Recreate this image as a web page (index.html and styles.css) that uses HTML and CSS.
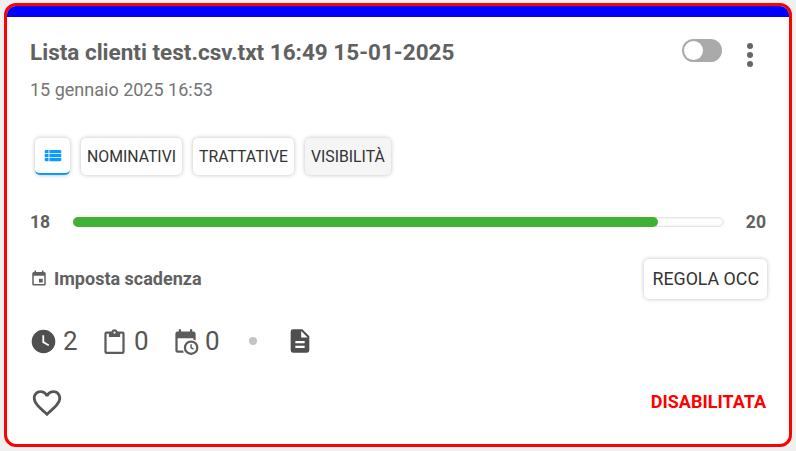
FILE: index.html
```html
<!DOCTYPE html>
<html lang="en">
<head>
  <meta charset="UTF-8" />
  <meta name="viewport" content="width=device-width, initial-scale=1.0" />
  <title>Lista clienti</title>
  <link rel="stylesheet" href="styles.css">
</head>
<body>
  <div class="card">
    <div class="topbar"></div>
    <div class="content">
      <div class="head">
        <div class="titles">
          <h1>Lista clienti test.csv.txt 16:49 15-01-2025</h1>
          <p class="date">15 gennaio 2025 16:53</p>
        </div>
        <div class="toggle"><span class="knob"></span></div>
        <div class="dots"><span></span><span></span><span></span></div>
      </div>

      <div class="tabs">
        <button class="tab tab-icon" aria-label="Lista">
          <svg width="18" height="18" viewBox="0 0 24 24"><path fill="#0a9bff" d="M1 5.500a1.500 1.500 0 0 1 1.500-1.500H6v4.200H1zM7.200 4h14.300A1.500 1.500 0 0 1 23 5.500v2.700H7.200zM1 9.400h5v4.200H1zM7.200 9.400H23v4.200H7.200zM1 14.800h5V19H2.500A1.500 1.500 0 0 1 1 17.500zM7.200 14.800H23v2.700a1.500 1.500 0 0 1-1.500 1.500H7.200z"/></svg>
        </button>
        <button class="tab">NOMINATIVI</button>
        <button class="tab">TRATTATIVE</button>
        <button class="tab tab-grey">VISIBILITÀ</button>
      </div>

      <div class="progress-row">
        <span class="num">18</span>
        <div class="track"><div class="fill" style="width: 90.2%"></div></div>
        <span class="num">20</span>
      </div>

      <div class="deadline-row">
        <div class="deadline">
          <svg width="18" height="18" viewBox="0 0 24 24"><path fill="#616161" d="M19 4h-1V2h-2v2H8V2H6v2H5a2 2 0 0 0-2 2v14a2 2 0 0 0 2 2h14a2 2 0 0 0 2-2V6a2 2 0 0 0-2-2zm0 16H5V9h14zm-7-7h5v5h-5z"/></svg>
          <span>Imposta scadenza</span>
        </div>
        <button class="tab rule">REGOLA OCC</button>
      </div>

      <div class="stats">
        <div class="stat">
          <svg width="27" height="27" viewBox="0 0 24 24"><path fill="#4f4f4f" d="M12 1.500a10.500 10.500 0 1 0 0 21 10.500 10.500 0 0 0 0-21zm4.300 14.600L11 13V6.500h1.600v5.600l4.500 2.700z"/></svg>
          <span>2</span>
        </div>
        <div class="stat">
          <svg width="27" height="27" viewBox="0 0 24 24"><path fill="#5c5c5c" d="M19 3h-4.200a3 3 0 0 0-5.600 0H5a2 2 0 0 0-2 2v16a2 2 0 0 0 2 2h14a2 2 0 0 0 2-2V5a2 2 0 0 0-2-2zm-7 0a1 1 0 1 1 0 2 1 1 0 0 1 0-2zm7 18H5V5h2v3h10V5h2z"/></svg>
          <span>0</span>
        </div>
        <div class="stat">
          <svg width="27" height="27" viewBox="0 0 24 24"><path fill="#5c5c5c" d="M19 3h-1V1h-2v2H8V1H6v2H5a2 2 0 0 0-2 2v15a2 2 0 0 0 2 2h5.500a7 7 0 0 1-.6-2H5V9h14v1.500a7 7 0 0 1 2 .6V5a2 2 0 0 0-2-2z"/><path fill="#5c5c5c" d="M17 11a6.500 6.500 0 1 0 0 13 6.500 6.500 0 0 0 0-13zm0 11a4.500 4.500 0 1 1 0-9 4.500 4.500 0 0 1 0 9zm.6-7.500h-1.300v3.400l2.500 1.500.7-1.100-1.900-1.100z"/></svg>
          <span>0</span>
        </div>
        <span class="sep"></span>
        <svg class="doc" width="28" height="28" viewBox="0 0 24 24"><path fill="#4f4f4f" d="M14 2H6a2 2 0 0 0-2 2v16a2 2 0 0 0 2 2h12a2 2 0 0 0 2-2V8zm2 16H8v-2h8zm0-4H8v-2h8zm-3-5V3.500L18.500 9z"/></svg>
      </div>

      <div class="foot">
        <svg class="heart" width="34" height="34" viewBox="0 0 24 24"><path fill="#555" d="M16.500 3c-1.700 0-3.400.8-4.500 2.100C10.900 3.800 9.200 3 7.500 3 4.400 3 2 5.400 2 8.500c0 3.800 3.400 6.900 8.600 11.500l1.400 1.300 1.400-1.300c5.200-4.600 8.600-7.700 8.600-11.500C22 5.400 19.600 3 16.500 3zm-4.400 15.600l-.1.100-.1-.1C7.100 14.300 4 11.500 4 8.500 4 6.500 5.500 5 7.500 5c1.500 0 3 1 3.600 2.400h1.900C13.500 6 15 5 16.500 5c2 0 3.500 1.500 3.500 3.500 0 3-3.100 5.800-7.900 10.100z"/></svg>
        <span class="status">DISABILITATA</span>
      </div>
    </div>
  </div>
</body>
</html>
```

FILE: styles.css
```css
html, body {
  height: 100%;
}

body {
  font-family: Roboto, Arial, sans-serif;
  background-color: #f0f0f0;
  margin: 0;
  padding: 3px 4px 4px 4px;
  box-sizing: border-box;
  overflow: hidden;
}

.card {
  height: 444px;
  box-sizing: border-box;
  background-color: #fff;
  border: 3px solid #f00;
  border-radius: 12px;
  overflow: hidden;
}

.topbar {
  height: 11px;
  background-color: #00f;
}

.content {
  padding: 0 23px 0 23px;
}

.head {
  display: flex;
  align-items: flex-start;
  height: 99px;
  padding-top: 22px;
  box-sizing: border-box;
}

.titles {
  flex: 1;
}

h1 {
  margin: 0;
  font-size: 22.500px;
  line-height: 26px;
  font-weight: 700;
  color: #616161;
}

.date {
  margin: 14px 0 0 0;
  font-size: 18px;
  line-height: 22px;
  color: #757575;
}

.toggle {
  width: 40px;
  height: 23px;
  background-color: #aaa;
  border-radius: 12px;
  box-sizing: border-box;
  padding: 2px;
}

.knob {
  display: block;
  width: 19px;
  height: 19px;
  background-color: #fff;
  border-radius: 50%;
}

.dots {
  display: flex;
  flex-direction: column;
  gap: 3px;
  margin: 4px 13px 0 25px;
}

.dots span {
  display: block;
  width: 6px;
  height: 6px;
  background-color: #666;
  border-radius: 50%;
}

.tabs {
  display: flex;
  gap: 11px;
  padding-left: 5px;
  margin-top: 22px;
}

.tab {
  height: 37px;
  padding: 0 6px;
  font-family: Roboto, Arial, sans-serif;
  font-size: 15.800px;
  color: #333;
  background-color: #fff;
  border: none;
  border-radius: 5px;
  box-shadow: 0 0 4px rgba(0, 0, 0, 0.25);
}

.tab-icon {
  width: 35px;
  padding: 0;
  display: flex;
  align-items: center;
  justify-content: center;
  border-bottom: 2px solid #0a9bff;
}

.tab-grey {
  background-color: #f5f5f5;
}

.progress-row {
  display: flex;
  align-items: center;
  margin-top: 36px;
  height: 22px;
}

.num {
  font-size: 17.600px;
  font-weight: 700;
  color: #616161;
}

.track {
  flex: 1;
  height: 10px;
  margin: 0 22px 0 23px;
  box-sizing: border-box;
  background-color: #fff;
  border: 1px solid #e6e6e6;
  border-radius: 5px;
  box-shadow: inset 0 0 2px rgba(0, 0, 0, 0.15);
}

.fill {
  height: 10px;
  margin: -1px 0 0 -1px;
  background-color: #3fb236;
  border-radius: 5px;
}

.deadline-row {
  display: flex;
  align-items: center;
  justify-content: space-between;
  margin-top: 26px;
}

.deadline {
  display: flex;
  align-items: center;
  gap: 6px;
  margin-bottom: 2px;
  font-size: 18px;
  font-weight: 700;
  color: #616161;
}

.rule {
  height: 40px;
  margin-right: -1px;
  padding: 0 8px 2px 8px;
  font-size: 17.800px;
}

.stats {
  display: flex;
  align-items: center;
  margin-top: 22px;
  height: 40px;
}

.stat {
  display: flex;
  align-items: center;
  gap: 6px;
  width: 71px;
  font-size: 26px;
  color: #555;
}

.sep {
  width: 8px;
  height: 8px;
  margin: 0 29px 0 6px;
  background-color: #c4c4c4;
  border-radius: 50%;
}

.foot {
  display: flex;
  align-items: center;
  justify-content: space-between;
  margin-top: 25px;
}

.status {
  margin-bottom: 4px;
  font-size: 18px;
  font-weight: 700;
  color: #f00;
}
```
